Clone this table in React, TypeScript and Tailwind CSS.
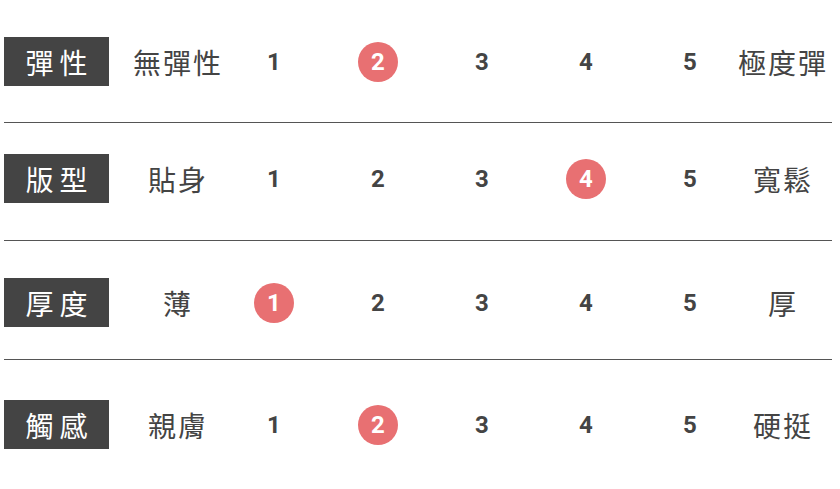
import React from 'react';

interface Row {
  label: string;
  low: string;
  high: string;
  value: number;
  pad: string;
}

const ROWS: Row[] = [
  { label: '彈性', low: '無彈性', high: '極度彈', value: 2, pad: 'pt-[37px] pb-[36px] border-b' },
  { label: '版型', low: '貼身', high: '寬鬆', value: 4, pad: 'pt-[31px] pb-[37px] border-b' },
  { label: '厚度', low: '薄', high: '厚', value: 1, pad: 'pt-[37px] pb-[32px] border-b' },
  { label: '觸感', low: '親膚', high: '硬挺', value: 2, pad: 'pt-[40px] pb-[40px]' },
];

const cjk = { fontFamily: '"Noto Sans CJK TC", "Noto Sans", sans-serif' };
const num = { fontFamily: 'Roboto, "Liberation Sans", sans-serif' };

const ScaleRow: React.FC<{ row: Row }> = ({ row }) => {
  return (
    <div className={`${row.pad} border-[#555555]`}>
      <div className="grid grid-cols-[105px_113px_104px_104px_104px_104px_104px_90px] items-center h-[49px]">
        {/* label tag */}
        <div
          className="h-[49px] bg-[#444444] text-white text-[28px] tracking-[6px] pl-[6px] flex items-center justify-center leading-none whitespace-nowrap"
          style={cjk}
        >
          {row.label}
        </div>

        <div
          className="pl-[25px] flex justify-center text-[28px] text-[#444444] tracking-[2px] leading-none whitespace-nowrap"
          style={cjk}
        >
          {row.low}
        </div>

        {[1, 2, 3, 4, 5].map((n) => (
          <div key={n} className="flex justify-center items-center">
            {n === row.value ? (
              <div
                className="w-10 h-10 rounded-full bg-[#e87072] text-white text-[24px] font-bold flex items-center justify-center leading-none"
                style={num}
              >
                {n}
              </div>
            ) : (
              <span className="text-[24px] font-bold text-[#444444] leading-none" style={num}>
                {n}
              </span>
            )}
          </div>
        ))}

        <div
          className="pr-[8px] flex justify-center text-[28px] text-[#444444] tracking-[2px] leading-none whitespace-nowrap"
          style={cjk}
        >
          {row.high}
        </div>
      </div>
    </div>
  );
};

export default function App() {
  return (
    <div className="w-[840px] h-[489px] bg-white overflow-hidden">
      <div className="ml-[4px] w-[828px]">
        {ROWS.map((r) => (
          <ScaleRow key={r.label} row={r} />
        ))}
      </div>
    </div>
  );
}
